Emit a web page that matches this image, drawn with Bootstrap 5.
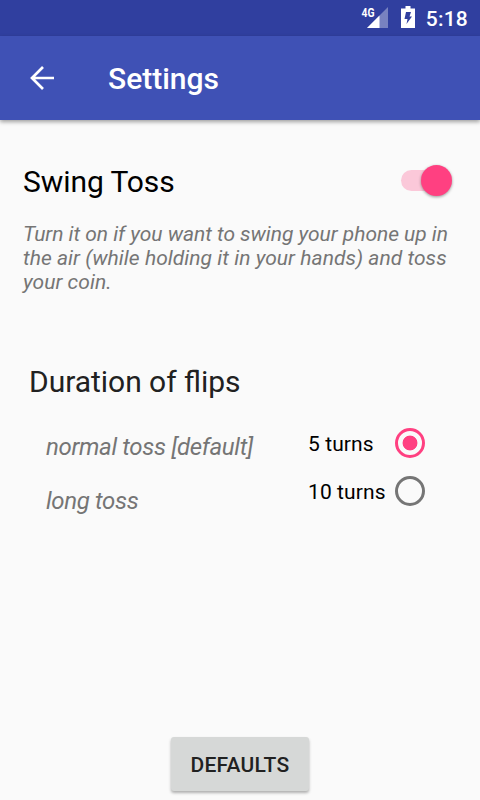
<!DOCTYPE html>
<html lang="en">
<head>
<meta charset="utf-8">
<meta name="viewport" content="width=device-width, initial-scale=1">
<title>Settings</title>
<link href="https://cdn.jsdelivr.net/npm/bootstrap@5.3.0/dist/css/bootstrap.min.css" rel="stylesheet">
<style>
body { font-family: Roboto, sans-serif; background: #fafafa; color: #000; font-size: 21px; line-height: 24px; }
.screen { height: 800px; overflow: hidden; }
.status-bar { height: 36px; background: #303f9f; color: #fff; padding-right: 12px; }
.battery { margin: 0 4px 0 9px; }
.clock { font-size: 21px; font-weight: 500; line-height: 36px; padding-top: 2px; letter-spacing: .2px; }
.app-bar { height: 84px; background: #3f51b5; padding: 0 28px; box-shadow: 0 2px 4px rgba(0,0,0,.36); }
.app-title { font-weight: 500; color: #fff !important; margin-left: 52px; font-size: 30px; line-height: 36px; padding-top: 2px !important; }
.swing { padding: 44px 28px 0 23px; }
.heading { font-size: 30px; line-height: 36px; font-weight: 400; letter-spacing: -.08px; }
.flips-heading { color: #212121; letter-spacing: -.03px; }
.hint { color: #757575; font-style: italic; }
.swing .hint { margin: 22px 0 0; }
.line-tight { letter-spacing: -.03px; }
.line-loose { letter-spacing: .04px; }
.track { width: 51px; height: 31px; margin-top: 1px; }
.toggle { width: 51px; height: 31px; overflow: visible; }
.knob { filter: drop-shadow(0 1.5px 1.5px rgba(0,0,0,.4)); }
.duration { padding: 70px 55px 0 29px; }
.choices { padding-top: 20px; }
.labels { padding: 12px 0 0 17px; font-size: 24px; line-height: 30px; gap: 24px; letter-spacing: -.34px; }
.option { height: 48px; width: 117px; letter-spacing: .1px; }
.ring { appearance: none; width: 30px; height: 30px; margin: 0 0 2px; border: 3px solid #757575; border-radius: 50%; }
.ring:checked { border-color: #ff4081; background: radial-gradient(circle, #ff4081 7px, transparent 7.8px); }
.btn-defaults { width: 138px; height: 54px; margin-bottom: 9px; padding: 3px 0 0; border: 0; border-radius: 3px; background: #d6d8d7; color: #212121; font-size: 21px; font-weight: 500; letter-spacing: .25px; box-shadow: 0 2px 3px rgba(0,0,0,.3); }
</style>
</head>
<body>
<div class="screen d-flex flex-column">
  <div class="status-bar d-flex align-items-center justify-content-end flex-shrink-0">
    <svg width="28" height="36" viewBox="0 0 28 36" aria-label="4G signal">
      <path d="M27 7v21H6z" fill="#fff" fill-opacity=".35"/>
      <path d="M18.500 15.500V28H6z" fill="#fff"/>
      <text x="0.500" y="17" fill="#fff" font-family="Roboto" font-size="13" font-weight="700" textLength="13" lengthAdjust="spacingAndGlyphs">4G</text>
    </svg>
    <svg class="battery" width="24" height="36" viewBox="0 0 24 36" aria-hidden="true">
      <path d="M7.500 6h5v2.500H17V28H3V8.500h4.500z" fill="#fff"/>
      <path d="M8 12h5l-1.500 4.500h2.500L8.500 24l1-5H6.500z" fill="#303f9f"/>
    </svg>
    <span class="clock">5:18</span>
  </div>
  <nav class="navbar app-bar flex-nowrap justify-content-start flex-shrink-0">
    <a href="#" class="d-flex" aria-label="Back">
      <svg width="28" height="28" viewBox="0 0 28 28" fill="none" stroke="#fff" stroke-width="2.700"><path d="M26 14H4M15 3L4 14l11 11"/></svg>
    </a>
    <span class="navbar-brand app-title p-0 me-0">Settings</span>
  </nav>
  <main class="flex-grow-1">
    <section class="swing">
      <div class="d-flex justify-content-between align-items-start">
        <h1 class="heading m-0">Swing Toss</h1>
        <div class="track" role="switch" aria-checked="true">
          <svg class="toggle d-block" viewBox="0 0 51 31">
            <rect x="0" y="5" width="46" height="21" rx="10.500" fill="#fbc8d9"/>
            <circle class="knob" cx="35.500" cy="15.500" r="15.500" fill="#ff4081"/>
          </svg>
        </div>
      </div>
      <p class="hint"><span class="line-tight">Turn it on if you want to swing your phone up in</span><br><span class="line-loose">the air (while holding it in your hands) and toss</span><br><span class="line-loose">your coin.</span></p>
    </section>
    <section class="duration">
      <h2 class="heading flips-heading m-0">Duration of <span aria-label="flips">ﬂips</span></h2>
      <div class="choices d-flex justify-content-between">
        <div class="labels hint d-flex flex-column">
          <span>normal toss [default]</span>
          <span>long toss</span>
        </div>
        <div>
          <label class="option d-flex align-items-center justify-content-between">5 turns <input class="ring" type="radio" name="turns" checked></label>
          <label class="option d-flex align-items-center justify-content-between">10 turns <input class="ring" type="radio" name="turns"></label>
        </div>
      </div>
    </section>
  </main>
  <button class="btn btn-defaults mx-auto flex-shrink-0" type="button">DEFAULTS</button>
</div>
<script src="https://cdn.jsdelivr.net/npm/bootstrap@5.3.0/dist/js/bootstrap.bundle.min.js"></script>
</body>
</html>
